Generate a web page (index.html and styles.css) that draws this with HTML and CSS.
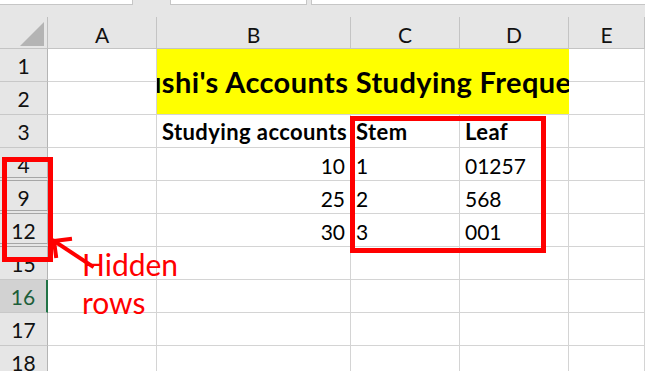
FILE: index.html
```html
<!DOCTYPE html>
<html lang="en">
<head>
<meta charset="utf-8">
<title>Stem and leaf</title>
<link rel="stylesheet" href="styles.css">
</head>
<body>
  <div class="formula-strip">
    <div class="field field-name"></div>
    <div class="field field-mid"></div>
    <div class="field field-formula"></div>
  </div>

  <div class="sheet">
    <!-- column headers -->
    <div class="corner"><span class="corner-tri"></span></div>
    <div class="col-head">A</div>
    <div class="col-head">B</div>
    <div class="col-head">C</div>
    <div class="col-head">D</div>
    <div class="col-head">E</div>

    <!-- rows 1-2: merged title B1:D2 -->
    <div class="row-head">1</div>
    <div class="cell"></div>
    <div class="cell title"><span class="title-text">Anushi's Accounts Studying Frequency</span></div>
    <div class="cell"></div>
    <div class="row-head">2</div>
    <div class="cell"></div>
    <div class="cell"></div>

    <!-- row 3 -->
    <div class="row-head">3</div>
    <div class="cell"></div>
    <div class="cell bold">Studying accounts</div>
    <div class="cell bold">Stem</div>
    <div class="cell bold">Leaf</div>
    <div class="cell"></div>

    <!-- data rows -->
    <div class="row-head gap-below">4</div>
    <div class="cell"></div>
    <div class="cell num">10</div>
    <div class="cell">1</div>
    <div class="cell">01257</div>
    <div class="cell"></div>

    <div class="row-head gap-below">9</div>
    <div class="cell"></div>
    <div class="cell num">25</div>
    <div class="cell">2</div>
    <div class="cell">568</div>
    <div class="cell"></div>

    <div class="row-head gap-below">12</div>
    <div class="cell"></div>
    <div class="cell num">30</div>
    <div class="cell">3</div>
    <div class="cell">001</div>
    <div class="cell"></div>

    <div class="row-head">15</div>
    <div class="cell"></div><div class="cell"></div><div class="cell"></div><div class="cell"></div><div class="cell"></div>

    <div class="row-head selected">16</div>
    <div class="cell"></div><div class="cell"></div><div class="cell"></div><div class="cell"></div><div class="cell"></div>

    <div class="row-head">17</div>
    <div class="cell"></div><div class="cell"></div><div class="cell"></div><div class="cell"></div><div class="cell"></div>

    <div class="row-head">18</div>
    <div class="cell"></div><div class="cell"></div><div class="cell"></div><div class="cell"></div><div class="cell"></div>
  </div>

  <!-- annotations drawn over the sheet -->
  <div class="mark mark-table"></div>
  <div class="mark mark-rows"></div>
  <svg class="arrow" width="60" height="40" viewBox="0 0 60 40">
    <g fill="none" stroke="#ff0000" stroke-width="4" stroke-linecap="square">
      <line x1="4" y1="6" x2="42" y2="31"/>
      <polyline points="20,4 4,6 6,21"/>
    </g>
  </svg>
  <div class="note">Hidden<br>rows</div>
</body>
</html>
```
FILE: styles.css
```css
html, body {
  margin: 0;
  height: 100%;
  overflow: hidden;
  background: #e6e6e6;
}

body {
  position: relative;
  font-family: Lato, "Liberation Sans", sans-serif;
  color: #000;
}

/* strip of input boxes above the grid */
.formula-strip {
  height: 17px;
  display: flex;
  align-items: flex-start;
  gap: 37px;
}
.field {
  background: #fff;
  border: 1px solid #c6c6c6;
  border-top: none;
  box-sizing: border-box;
  height: 5px;
}
.field-name { width: 133px; border-left: none; }
.field-mid { width: 137px; }
.field-formula { flex: 1; margin-left: -33px; border-right: none; }

/* worksheet grid */
.sheet {
  display: grid;
  grid-template-columns: 48px 109px 194px 109px 109px 1fr;
  grid-template-rows: 32px repeat(10, 33px);
  background: #fff;
}

.corner {
  background: #e6e6e6;
  border-right: 1px solid #bfbfbf;
  border-bottom: 1px solid #c4c4c4;
  position: relative;
}
.corner-tri {
  position: absolute;
  left: 20px;
  top: 5px;
  width: 0;
  height: 0;
  border-left: 24px solid transparent;
  border-bottom: 24px solid #b4b4b4;
}

.col-head {
  background: #e6e6e6;
  border-right: 1px solid #c4c4c4;
  border-bottom: 1px solid #c4c4c4;
  display: flex;
  align-items: center;
  justify-content: center;
  font-size: 21px;
  padding-top: 3px;
  box-sizing: border-box;
  color: #111;
}

.row-head {
  background: #e6e6e6;
  border-right: 1px solid #b4b4b4;
  border-bottom: 1px solid #c8c8c8;
  display: flex;
  align-items: flex-end;
  justify-content: center;
  font-size: 21px;
  line-height: 1;
  padding-bottom: 5px;
  box-sizing: border-box;
  color: #111;
}
.row-head.gap-below {
  border-bottom: 4px double #a6a6a6;
  padding-bottom: 2px;
}
.row-head.selected {
  background: #d2d2d2;
  border-right: 2px solid #217346;
  color: #1d5e3a;
}

.cell {
  border-right: 1px solid #d4d4d4;
  border-bottom: 1px solid #d4d4d4;
  display: flex;
  align-items: flex-end;
  padding: 0 5px 4px;
  font-size: 21px;
  line-height: 1;
  white-space: nowrap;
  box-sizing: border-box;
  min-width: 0;
}
.cell.bold {
  font-weight: 700;
  font-size: 22px;
  letter-spacing: 0.4px;
}
.cell.num { justify-content: flex-end; }

.title {
  grid-column: 3 / 6;
  grid-row: 2 / 4;
  background: #ffff00;
  border-right: none;
  overflow: hidden;
  align-items: center;
  justify-content: center;
  padding: 0;
}
.title-text {
  font-size: 29px;
  font-weight: 700;
  letter-spacing: 0.4px;
  flex: none;
}

/* red annotations */
.mark {
  position: absolute;
  border: 5px solid #ff0000;
  box-sizing: border-box;
}
.mark-table { left: 350px; top: 116px; width: 196px; height: 137px; }
.mark-rows { left: 2px; top: 157px; width: 51px; height: 105px; }

.arrow {
  position: absolute;
  left: 50px;
  top: 235px;
}

.note {
  position: absolute;
  left: 82px;
  top: 245px;
  color: #ff0000;
  font-size: 30px;
  line-height: 38px;
}
```
